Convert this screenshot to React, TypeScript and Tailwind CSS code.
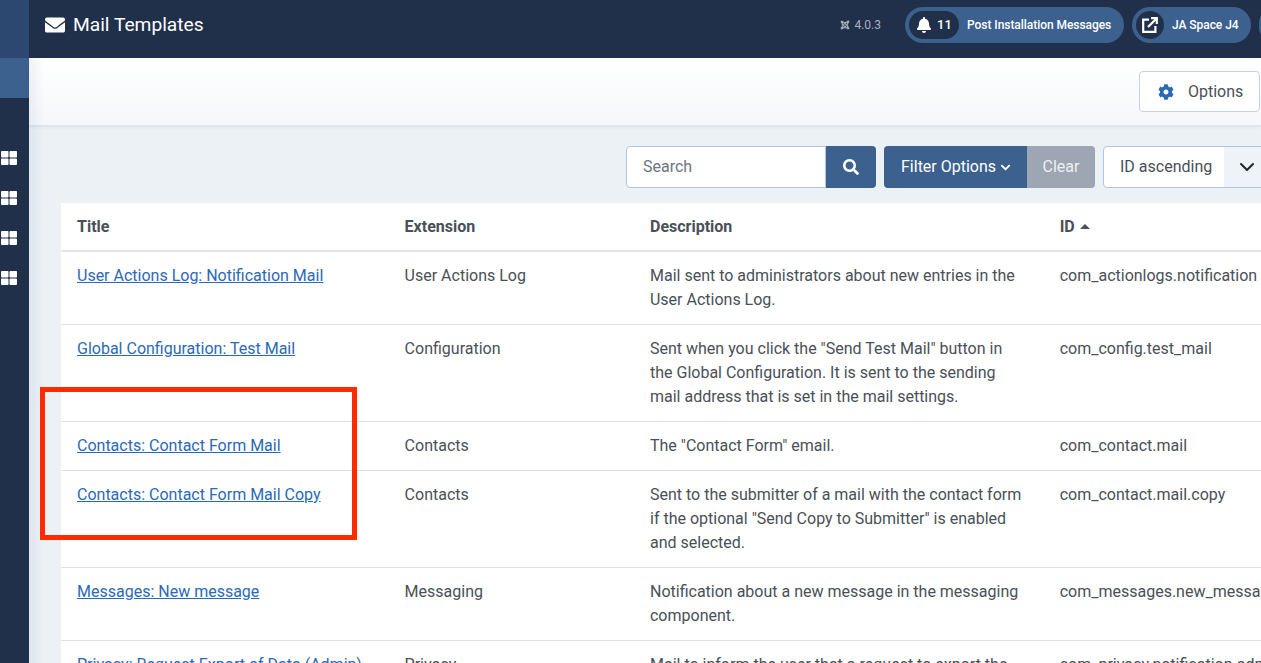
import { FaBell, FaChevronDown, FaCog, FaEnvelope, FaJoomla, FaSearch, FaThLarge } from 'react-icons/fa'
import { ChevronDown } from 'lucide-react'

const rows = [
  {
    title: 'User Actions Log: Notification Mail',
    extension: 'User Actions Log',
    description: 'Mail sent to administrators about new entries in the User Actions Log.',
    id: 'com_actionlogs.notification',
  },
  {
    title: 'Global Configuration: Test Mail',
    extension: 'Configuration',
    description:
      'Sent when you click the "Send Test Mail" button in the Global Configuration. It is sent to the sending mail address that is set in the mail settings.',
    id: 'com_config.test_mail',
  },
  {
    title: 'Contacts: Contact Form Mail',
    extension: 'Contacts',
    description: 'The "Contact Form" email.',
    id: 'com_contact.mail',
  },
  {
    title: 'Contacts: Contact Form Mail Copy',
    extension: 'Contacts',
    description:
      'Sent to the submitter of a mail with the contact form if the optional "Send Copy to Submitter" is enabled and selected.',
    id: 'com_contact.mail.copy',
  },
  {
    title: 'Messages: New message',
    extension: 'Messaging',
    description: 'Notification about a new message in the messaging component.',
    id: 'com_messages.new_message',
  },
  {
    title: 'Privacy: Request Export of Data (Admin)',
    extension: 'Privacy',
    description: 'Mail to inform the user that a request to export the data has been made.',
    id: 'com_privacy.notification.admin',
  },
]

function Sidebar() {
  return (
    <div className="flex flex-col w-[29px] shrink-0 bg-[#20304a] overflow-hidden">
      <div className="h-[58px] bg-[#2c4870]" />
      <div className="h-10 bg-[#3d618f]" />
      <div className="flex flex-col gap-[24px] pt-[52px] pl-px">
        <FaThLarge className="text-white text-base" />
        <FaThLarge className="text-white text-base" />
        <FaThLarge className="text-white text-base" />
        <FaThLarge className="text-white text-base" />
      </div>
    </div>
  )
}

function Header() {
  return (
    <div className="flex items-center h-[58px] shrink-0 bg-[#20304a] pl-4 pb-2 text-white overflow-hidden">
      <FaEnvelope className="text-[20px] shrink-0" />
      <span className="ml-2 text-[19.2px] whitespace-nowrap">Mail Templates</span>
      <div className="flex items-center ml-auto shrink-0">
        <FaJoomla className="text-[10px] text-[#a9b2bf]" />
        <span className="ml-1 text-xs text-[#a9b2bf]">4.0.3</span>
        <div className="flex items-center h-9 w-[219px] ml-6 pl-1 rounded-full bg-[#3d618f]">
          <div className="flex items-center gap-[5px] h-7 w-[50px] pl-[7px] rounded-full bg-[#20304a]">
            <FaBell className="text-base shrink-0" />
            <span className="text-[13px] font-medium">11</span>
          </div>
          <span className="ml-2 text-xs font-medium tracking-[-0.05px] whitespace-nowrap">Post Installation Messages</span>
        </div>
        <div className="flex items-center h-9 w-[119px] ml-2 pl-1 rounded-full bg-[#3d618f]">
          <div className="flex items-center justify-center size-7 rounded-full bg-[#20304a]">
            <svg width="16" height="16" viewBox="0 0 16 16" fill="none" stroke="currentColor" strokeWidth="2.2">
              <path d="M7 2.6H1.2V14.8H13.4V9" />
              <path d="M6 10L14.8 1.2" />
              <path d="M9 1.2H14.8V7" />
            </svg>
          </div>
          <span className="ml-2 text-xs font-medium tracking-[-0.05px] whitespace-nowrap">JA Space J4</span>
        </div>
        <div className="h-9 w-8 ml-2 -mr-[30px] rounded-full bg-[#3d618f]" />
      </div>
    </div>
  )
}

function Toolbar() {
  return (
    <div className="flex items-center justify-end h-[67px] shrink-0 pr-[1px] bg-gradient-to-b from-white to-[#f5f7fb] shadow-[0_1px_4px_rgba(30,60,100,0.12)]">
      <button className="flex items-center gap-[14px] h-[41px] w-[121px] pl-[18px] rounded border border-[#c9d1dd] bg-white text-[#495057]">
        <FaCog className="text-[#2a69b8]" />
        <span>Options</span>
      </button>
    </div>
  )
}

function Filters() {
  return (
    <div className="flex items-center h-[42px] mt-[21px] pl-[597px] shrink-0 whitespace-nowrap">
      <div className="flex items-center h-full w-[200px] shrink-0 pl-4 rounded-l border border-[#b2c6e3] bg-white text-[#6d757e]">Search</div>
      <div className="flex items-center justify-center h-full w-[50px] shrink-0 rounded-r bg-[#3d618f] text-white">
        <FaSearch />
      </div>
      <div className="flex items-center gap-1 h-full w-[143px] shrink-0 ml-2 pl-[17px] rounded-l bg-[#3d618f] text-white">
        Filter Options
        <FaChevronDown className="text-[11px]" />
      </div>
      <div className="flex items-center justify-center h-full w-[68px] shrink-0 rounded-r bg-[#9da6b2] text-[#eef0f3]">Clear</div>
      <div className="flex items-center h-full w-[200px] shrink-0 ml-2 rounded border border-[#b2c6e3] bg-white text-[#495057]">
        <span className="pl-4 w-[120px] shrink-0 whitespace-nowrap">ID ascending</span>
        <div className="flex items-center h-full flex-1 pl-[11px] bg-[#eef2f9]">
          <ChevronDown className="size-6 text-[#22262a]" />
        </div>
      </div>
    </div>
  )
}

function MailTable() {
  return (
    <div className="flex-1 pl-8 mt-[15px] min-w-0">
      <table className="table-fixed w-[1240px] bg-white text-[#495057] border-collapse">
        <colgroup>
          <col className="w-[327.6px]" />
          <col className="w-[245.4px]" />
          <col className="w-[409.7px]" />
          <col />
        </colgroup>
        <thead>
          <tr className="border-b-2 border-[#e3e4e6] h-12 text-left">
            <th className="px-4 font-bold">Title</th>
            <th className="px-4 font-bold">Extension</th>
            <th className="px-4 font-bold">Description</th>
            <th className="px-4 font-bold">
              ID
              <span className="inline-block ml-[5px] mb-[3px] border-x-[5px] border-b-[5px] border-x-transparent border-b-[#495057]" />
            </th>
          </tr>
        </thead>
        <tbody>
          {rows.map((row) => (
            <tr key={row.id} className="border-b border-[#dfe1e4] align-top">
              <td className="px-4 py-3">
                <a href="#" className="text-[#2a69b8] underline">{row.title}</a>
              </td>
              <td className="px-4 py-3">{row.extension}</td>
              <td className="px-4 py-3">{row.description}</td>
              <td className="px-4 py-3 whitespace-nowrap">{row.id}</td>
            </tr>
          ))}
        </tbody>
      </table>
    </div>
  )
}

export default function App() {
  return (
    <div className="relative flex h-[663px] w-[1261px] overflow-hidden font-['Roboto',sans-serif] text-base bg-[#ecf1f6]">
      <Sidebar />
      <div className="flex flex-col flex-1 min-w-0">
        <Header />
        <Toolbar />
        <Filters />
        <MailTable />
      </div>
      {/* soft shadow the sidebar throws over the content */}
      <div className="absolute left-[29px] top-[58px] bottom-0 w-4 bg-gradient-to-r from-[rgba(60,90,140,0.08)] to-transparent" />
      <div className="absolute left-[40px] top-[387px] w-[317px] h-[153px] border-[5px] border-[#ff2a00]" />
    </div>
  )
}
